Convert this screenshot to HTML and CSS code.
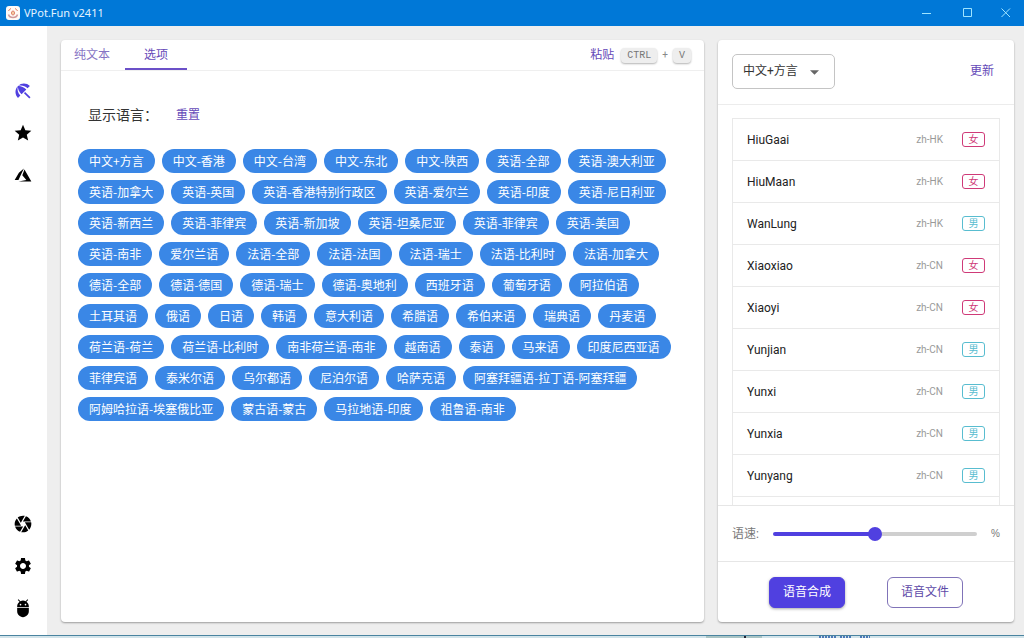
FILE: index.html
```html
<!DOCTYPE html>
<html lang="zh-CN">
<head>
<meta charset="utf-8">
<meta name="viewport" content="width=device-width, initial-scale=1">
<title>VPot.Fun v2411</title>
<link rel="stylesheet" href="styles.css">
</head>
<body>
<header class="titlebar">
  <svg class="logo" viewBox="0 0 28 28" aria-hidden="true">
    <rect width="28" height="28" rx="6" fill="#fffaf6"/>
    <g fill="none" stroke="#dd7a62" stroke-width="2">
      <path d="M5 10a10 10 0 0 1 5-5M18 5a10 10 0 0 1 5 5"/>
      <path d="M5 17c1 4 4 6 9 6s8-2 9-6" stroke="#cf9a9c" stroke-width="3"/>
      <ellipse cx="14" cy="14" rx="3" ry="4"/>
    </g>
    <circle cx="14" cy="14" r="1.500" fill="#e5a13c"/>
  </svg>
  <h1 class="app-name">VPot.Fun v2411</h1>
  <div class="window-controls">
    <button class="window-button" aria-label="最小化"><svg viewBox="0 0 10 10"><path d="M0 5.500h9"/></svg></button>
    <button class="window-button" aria-label="最大化"><svg viewBox="0 0 10 10"><path d="M.5.500h8v8h-8z"/></svg></button>
    <button class="window-button" aria-label="关闭"><svg viewBox="0 0 10 10"><path d="M.5.500l8.500 8.500M9 .5L.5 9"/></svg></button>
  </div>
</header>

<div class="workspace">
  <nav class="sidebar">
    <div class="nav-group">
      <button class="nav-button active" aria-label="主页"><svg viewBox="0 0 24 24"><path d="M13.127 14.560l1.430-1.430 6.440 6.443L19.570 21zm4.293-5.730l2.860-2.860c-3.950-3.950-10.350-3.960-14.300-.02 3.930-1.300 8.310-.25 11.440 2.880zM5.950 5.980c-3.940 3.950-3.930 10.350.02 14.300l2.860-2.860C5.700 14.290 4.650 9.910 5.950 5.980zm.02-.02l-.01.01c-.38 3.010 1.170 6.880 4.300 10.020l5.730-5.730c-3.130-3.140-7.010-4.690-10.020-4.300z"/></svg></button>
      <button class="nav-button" aria-label="收藏"><svg viewBox="0 0 24 24"><path d="M12 17.270L18.180 21l-1.640-7.030L22 9.240l-7.190-.61L12 2 9.190 8.630 2 9.240l5.460 4.730L5.820 21z"/></svg></button>
      <button class="nav-button" aria-label="Azure"><svg viewBox="0 0 24 24"><path d="M13.050 4.240L6.560 18.050L2 18L7.090 9.240L13.050 4.240M13.750 5.330L22 19.760H6.740L16.040 18.100L11.170 12.310L13.750 5.330Z"/></svg></button>
    </div>
    <div class="nav-group">
      <button class="nav-button" aria-label="相机"><svg viewBox="0 0 24 24"><path d="M9.400 10.500l4.770-8.260C13.470 2.090 12.750 2 12 2c-2.400 0-4.600.85-6.320 2.250l3.660 6.350.06-.1zM21.540 9c-.92-2.920-3.150-5.260-6-6.340L11.880 9h9.660zm.26 1h-7.490l.29.5 4.760 8.250C21 16.970 22 14.610 22 12c0-.69-.07-1.350-.2-2zM8.540 12l-3.900-6.750C3.010 7.030 2 9.390 2 12c0 .69.07 1.350.2 2h7.490l-1.150-2zm-6.080 3c.92 2.920 3.150 5.260 6 6.340L12.120 15H2.460zm11.270 0l-3.900 6.760c.7.15 1.420.24 2.170.24 2.400 0 4.600-.85 6.320-2.250l-3.660-6.350-.93 1.600z"/></svg></button>
      <button class="nav-button" aria-label="设置"><svg viewBox="0 0 24 24"><path d="M19.140 12.940c.04-.3.060-.61.060-.94 0-.32-.02-.64-.07-.94l2.030-1.580c.18-.14.230-.41.120-.61l-1.920-3.320c-.12-.22-.37-.29-.59-.22l-2.390.96c-.5-.38-1.030-.7-1.620-.94l-.36-2.540c-.04-.24-.24-.41-.48-.41h-3.840c-.24 0-.43.17-.47.41l-.36 2.540c-.59.24-1.130.57-1.620.94l-2.390-.96c-.22-.08-.47 0-.59.22L2.740 8.870c-.12.21-.08.47.12.61l2.030 1.580c-.05.3-.09.63-.09.94s.02.64.07.94l-2.030 1.580c-.18.14-.23.41-.12.61l1.920 3.320c.12.22.37.29.59.22l2.390-.96c.5.38 1.030.7 1.620.94l.36 2.540c.05.24.24.41.48.41h3.840c.24 0 .44-.17.47-.41l.36-2.540c.59-.24 1.130-.56 1.620-.94l2.390.96c.22.08.47 0 .59-.22l1.920-3.320c.12-.22.070-.47-.12-.61l-2.010-1.580zM12 15.600c-1.980 0-3.600-1.620-3.600-3.600s1.620-3.600 3.600-3.600 3.600 1.620 3.600 3.600-1.620 3.600-3.600 3.600z"/></svg></button>
      <button class="nav-button" aria-label="调试"><svg viewBox="0 0 24 24"><path d="M5 16c0 3.870 3.130 7 7 7s7-3.130 7-7v-4H5v4zM16.120 4.370l2.100-2.100-.82-.83-2.300 2.310C14.160 3.280 13.120 3 12 3s-2.160.28-3.090.75L6.600 1.440l-.82.83 2.100 2.100C6.140 5.640 5 7.680 5 10v1h14v-1c0-2.320-1.140-4.360-2.880-5.630zM9 9c-.55 0-1-.45-1-1s.45-1 1-1 1 .45 1 1-.45 1-1 1zm6 0c-.55 0-1-.45-1-1s.45-1 1-1 1 .45 1 1-.45 1-1 1z"/></svg></button>
    </div>
  </nav>

  <main class="card options">
    <div class="tab-row">
      <div class="tabs" role="tablist">
        <button class="tab" role="tab" aria-selected="false">纯文本</button>
        <button class="tab" role="tab" aria-selected="true">选项</button>
      </div>
      <div class="paste"><button class="link-button">粘贴</button><kbd>CTRL</kbd><span class="plus">+</span><kbd>V</kbd></div>
    </div>
    <div class="option-body">
      <div class="option-head"><h2>显示语言：</h2><button class="link-button">重置</button></div>
      <div class="chips">
        <button class="chip">中文+方言</button><button class="chip">中文-香港</button><button class="chip">中文-台湾</button><button class="chip">中文-东北</button><button class="chip">中文-陕西</button><button class="chip">英语-全部</button><button class="chip">英语-澳大利亚</button>
        <button class="chip">英语-加拿大</button><button class="chip">英语-英国</button><button class="chip">英语-香港特别行政区</button><button class="chip">英语-爱尔兰</button><button class="chip">英语-印度</button><button class="chip">英语-尼日利亚</button>
        <button class="chip">英语-新西兰</button><button class="chip">英语-菲律宾</button><button class="chip">英语-新加坡</button><button class="chip">英语-坦桑尼亚</button><button class="chip">英语-菲律宾</button><button class="chip">英语-美国</button>
        <button class="chip">英语-南非</button><button class="chip">爱尔兰语</button><button class="chip">法语-全部</button><button class="chip">法语-法国</button><button class="chip">法语-瑞士</button><button class="chip">法语-比利时</button><button class="chip">法语-加拿大</button>
        <button class="chip">德语-全部</button><button class="chip">德语-德国</button><button class="chip">德语-瑞士</button><button class="chip">德语-奥地利</button><button class="chip">西班牙语</button><button class="chip">葡萄牙语</button><button class="chip">阿拉伯语</button>
        <button class="chip">土耳其语</button><button class="chip">俄语</button><button class="chip">日语</button><button class="chip">韩语</button><button class="chip">意大利语</button><button class="chip">希腊语</button><button class="chip">希伯来语</button><button class="chip">瑞典语</button><button class="chip">丹麦语</button>
        <button class="chip">荷兰语-荷兰</button><button class="chip">荷兰语-比利时</button><button class="chip">南非荷兰语-南非</button><button class="chip">越南语</button><button class="chip">泰语</button><button class="chip">马来语</button><button class="chip">印度尼西亚语</button>
        <button class="chip">菲律宾语</button><button class="chip">泰米尔语</button><button class="chip">乌尔都语</button><button class="chip">尼泊尔语</button><button class="chip">哈萨克语</button><button class="chip">阿塞拜疆语-拉丁语-阿塞拜疆</button>
        <button class="chip">阿姆哈拉语-埃塞俄比亚</button><button class="chip">蒙古语-蒙古</button><button class="chip">马拉地语-印度</button><button class="chip">祖鲁语-南非</button>
      </div>
    </div>
  </main>

  <aside class="card voices">
    <div class="voice-head">
      <div class="select-wrap">
        <select aria-label="语言"><option>中文+方言</option></select>
        <svg viewBox="0 0 10 5" aria-hidden="true"><path d="M0 0h10L5 5z"/></svg>
      </div>
      <button class="link-button">更新</button>
    </div>
    <div class="voice-scroll">
      <ul class="voice-list">
        <li><span class="name">HiuGaai</span><span class="locale">zh-HK</span><span class="badge female">女</span></li>
        <li><span class="name">HiuMaan</span><span class="locale">zh-HK</span><span class="badge female">女</span></li>
        <li><span class="name">WanLung</span><span class="locale">zh-HK</span><span class="badge male">男</span></li>
        <li><span class="name">Xiaoxiao</span><span class="locale">zh-CN</span><span class="badge female">女</span></li>
        <li><span class="name">Xiaoyi</span><span class="locale">zh-CN</span><span class="badge female">女</span></li>
        <li><span class="name">Yunjian</span><span class="locale">zh-CN</span><span class="badge male">男</span></li>
        <li><span class="name">Yunxi</span><span class="locale">zh-CN</span><span class="badge male">男</span></li>
        <li><span class="name">Yunxia</span><span class="locale">zh-CN</span><span class="badge male">男</span></li>
        <li><span class="name">Yunyang</span><span class="locale">zh-CN</span><span class="badge male">男</span></li>
        <li></li>
      </ul>
    </div>
    <div class="speed">
      <label for="speed">语速:</label>
      <input id="speed" type="range" min="0" max="100" value="50">
      <span class="percent">%</span>
    </div>
    <div class="actions">
      <button class="action primary">语音合成</button>
      <button class="action">语音文件</button>
    </div>
  </aside>
</div>
<div class="desktop-edge" aria-hidden="true">
  <svg viewBox="0 0 320 2">
    <path d="M2 0h56v2H2z" fill="#a9c4c4"/>
    <path d="M40 0h2v2h-2z" fill="#223"/>
    <path d="M115 1h18M136 1h12M156 1h10" fill="none" stroke="#4c79b8" stroke-width="2" stroke-dasharray="2 1"/>
  </svg>
</div>
</body>
</html>
```
FILE: styles.css
```css
* { box-sizing: border-box; }

body {
  margin: 0;
  height: 100vh;
  display: flex;
  flex-direction: column;
  overflow: hidden;
  background: #eeeeee;
  color: #333;
  font: 12px/16px Roboto, "Noto Sans CJK SC", sans-serif;
}

button {
  margin: 0;
  padding: 0;
  border: 0;
  background: none;
  color: inherit;
  font: inherit;
  cursor: pointer;
}

.titlebar {
  flex: none;
  display: flex;
  align-items: center;
  gap: 4px;
  height: 26px;
  padding-left: 6px;
  background: #0078d7;
  color: #e4f3ff;
}
.logo { width: 14px; height: 14px; }
.app-name {
  margin: 0;
  font: 11px/16px "Noto Sans", sans-serif;
}
.window-controls { display: flex; margin-left: auto; }
.window-button {
  display: grid;
  place-items: center;
  width: 41px;
  height: 26px;
}
.window-button:last-child { width: 38px; }
.window-button svg {
  width: 10px;
  height: 10px;
  fill: none;
  stroke: #9fe4ff;
}
.window-controls { padding-right: 0; }
.window-button:last-child { width: 36px; }

.workspace {
  flex: 1;
  min-height: 0;
  display: flex;
  padding-right: 10px;
}
.sidebar {
  flex: none;
  display: flex;
  flex-direction: column;
  justify-content: space-between;
  width: 47px;
  padding: 44px 1px 6px 0;
  background: #fff;
}
.nav-group { display: flex; flex-direction: column; }
.nav-button {
  display: grid;
  place-items: center;
  height: 42px;
  color: #000;
}
.nav-button.active { color: #5040e0; }
.nav-button svg { width: 20px; height: 20px; fill: currentColor; }

.card {
  display: flex;
  flex-direction: column;
  margin: 14px 0 13px 14px;
  border-radius: 4px;
  background: #fff;
  box-shadow: 0 1px 2px rgba(0, 0, 0, .35);
}
.options { flex: 1; min-width: 0; }

.tab-row {
  display: flex;
  justify-content: space-between;
  height: 31px;
  padding-right: 13px;
  border-bottom: 1px solid #efefef;
}
.tabs { display: flex; }
.tab {
  padding: 2px 19px 0;
  border-bottom: 2px solid transparent;
  color: #8673c4;
}
.tab:first-child { padding: 2px 14px 0 13px; }
.tab[aria-selected="true"] { border-color: #6b50c8; color: #6549b8; }
.tab:first-child + .tab { margin-left: 1px; }
.link-button { color: #6549b8; }
.paste { display: flex; align-items: center; gap: 5px; }
.paste kbd {
  padding: 0 6px;
  border-radius: 4px;
  background: #eee;
  box-shadow: 0 1px 2px rgba(0, 0, 0, .3);
  color: #777;
  font: 10px/15px "Liberation Mono", monospace;
}
.paste .link-button { padding-right: 2px; }
.plus { color: #888; font-size: 10px; }

.option-body { padding: 36px 14px 0 17px; }
.option-head {
  display: flex;
  align-items: center;
  gap: 18px;
  padding-left: 10px;
}
.option-head h2 { margin: 0; font-size: 14px; line-height: 16px; font-weight: 400; }
.chips {
  display: flex;
  flex-wrap: wrap;
  gap: 7px;
  padding-top: 26px;
}
.chip {
  height: 24px;
  padding: 0 11px 1px;
  border-radius: 12px;
  background: #3a87e6;
  color: #fff;
  font-family: "Noto Sans CJK SC", sans-serif;
}

.voices { flex: none; width: 296px; }
.voice-head {
  flex: none;
  display: flex;
  align-items: center;
  justify-content: space-between;
  height: 65px;
  padding: 0 20px 2px 14px;
  border-bottom: 1px solid #ececec;
}
.select-wrap { position: relative; color: #333; }
.select-wrap select {
  appearance: none;
  height: 35px;
  width: 103px;
  padding: 0 28px 0 10px;
  border: 1px solid #c4c4c4;
  border-radius: 5px;
  background: #fff;
  color: inherit;
  font: inherit;
}
.select-wrap svg {
  position: absolute;
  top: 16px;
  right: 16px;
  width: 9px;
  height: 5px;
  fill: #666;
  pointer-events: none;
}
.voice-scroll {
  flex: 1;
  min-height: 0;
  overflow: hidden;
  padding: 13px 14px 0;
}
.voice-list {
  margin: 0;
  padding: 0;
  border: 1px solid #e9e9e9;
  list-style: none;
}
.voice-list li {
  display: flex;
  align-items: center;
  height: 42px;
  padding: 0 14px;
  border-bottom: 1px solid #e9e9e9;
}
.name { flex: 1; color: #222; }
.locale { color: #999; font-size: 10px; }
.badge {
  width: 23px;
  margin-left: 19px;
  border: 1px solid;
  border-radius: 3px;
  font-size: 10px;
  line-height: 13px;
  text-align: center;
}
.female { color: #cf3a78; }
.male { color: #58bdd0; }

.speed {
  flex: none;
  display: flex;
  align-items: center;
  gap: 14px;
  height: 57px;
  padding: 0 14px;
  border-top: 1px solid #e6e6e6;
  border-bottom: 1px solid #e6e6e6;
  color: #777;
}
.speed input {
  appearance: none;
  flex: 1;
  min-width: 0;
  height: 14px;
  margin: 0;
  background: none;
}
.speed input::-webkit-slider-runnable-track {
  height: 4px;
  border-radius: 2px;
  background: linear-gradient(to right, #5040e0 50%, #cfcfcf 50%);
}
.speed input::-webkit-slider-thumb {
  appearance: none;
  width: 14px;
  height: 14px;
  margin-top: -5px;
  border-radius: 50%;
  background: #5040e0;
}
.percent { font: 10px/16px "Liberation Sans", sans-serif; }

.actions {
  flex: none;
  display: flex;
  justify-content: center;
  align-items: center;
  gap: 42px;
  height: 60px;
}
.action {
  width: 76px;
  height: 31px;
  border: 1px solid #8073b8;
  border-radius: 6px;
  color: #5d4aa8;
}
.action.primary {
  border-color: #5040e0;
  background: #5040e0;
  box-shadow: 0 1px 3px rgba(0, 0, 0, .35);
  color: #fff;
}

.desktop-edge {
  flex: none;
  display: flex;
  justify-content: flex-end;
  height: 3px;
  border-top: 1px solid #4a84a0;
  background: #d3e4ea;
}
.desktop-edge svg { width: 320px; height: 2px; }
```
